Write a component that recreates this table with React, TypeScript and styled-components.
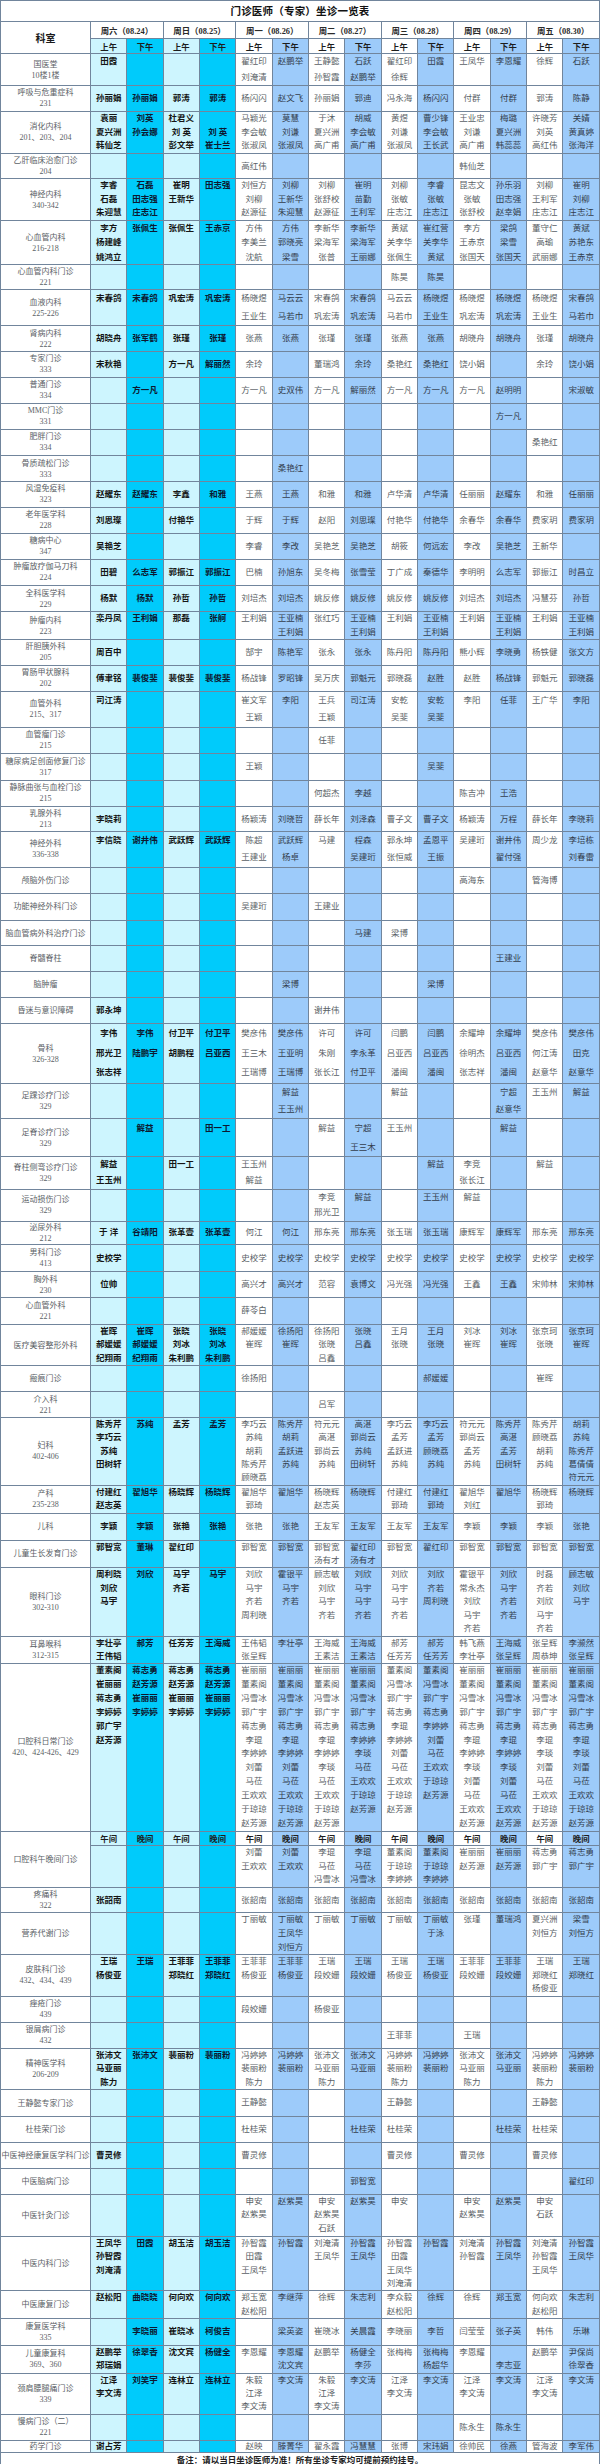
import React from "react";
import styled, { createGlobalStyle } from "styled-components";

const FONT = `"Liberation Serif", "Noto Sans CJK SC", serif`;
const LINE = "#71859c";

const GlobalStyle = createGlobalStyle`
  html, body { margin: 0; padding: 0; background: #ffffff; }
  body { font-family: ${FONT}; }
`;

const BG = ["#cdf5fe", "#00cbfb", "#ffffff", "#9dcbfa"];
const FG = ["#151515", "#0c1830", "#5a5f66", "#333d4c"];
const kindOf = (i: number) => (i < 4 ? i % 2 : 2 + (i % 2));

type Cells = string | Record<number, string>;
interface RowData {
  d: string;
  r: string;
  h: number;
  n: number;
  c: string[];
}

const R = (d: string, r: string, h: number, n: number, c: Cells): RowData => ({
  d,
  r,
  h,
  n,
  c:
    typeof c === "string"
      ? c.split("|")
      : Array.from({ length: 14 }, (_, i) => c[i] ?? ""),
});

const rep = (s: string, k: number) => Array.from({ length: k }, () => s).join("|");

const KQ_ALL = "崔丽丽/董素阁/冯雪冰/郭广宇/蒋志勇/李琨/李婷婷/刘蕾/马莅/王欢欢/于琼琼/赵芳源";
const KQ_WE = "蒋志勇/赵芳源/崔丽丽/李婷婷";
const KQ_TH = "崔丽丽/董素阁/冯雪冰/郭广宇/蒋志勇/李琨/李婷婷/李琰/刘蕾/马莅/王欢欢/赵芳源";
const KQ_FR = "崔丽丽/董素阁/冯雪冰/郭广宇/蒋志勇/李琨/李琰/刘蕾/马莅/王欢欢/于琼琼/赵芳源";

const ROWS_A: RowData[] = [
  R("国医堂", "10楼1楼", 31.7, 2, "田霞||||翟红印/刘淹清|赵鹏举|王静懿/孙智霞|石跃/赵鹏举|翟红印/徐辉|田霞|王凤华|李恩耀|徐辉|石跃"),
  R("呼吸与危重症科", "231", 26, 1, "孙丽娟|孙丽娟|郭涛|郭涛|杨闪闪|赵文飞|孙丽娟|郭迪|冯永海|杨闪闪|付群|付群|郭涛|陈静"),
  R("消化内科", "201、203、204", 41.7, 3, "袁丽/夏兴洲/韩仙芝|刘英/孙会娜|杜君义/刘 英/彭文举|/刘 英/崔士兰|马颖光/李会敏/张淑凤|莫慧/刘谦/张淑凤|于沐/夏兴洲/高广甫|胡威/李会敏/高广甫|黄煜/刘谦/张淑凤|曹少锋/李会敏/王长武|王业忠/刘谦/高广甫|梅璐/夏兴洲/韩蕊蕊|许晓芳/刘英/高红伟|关婧/黄真婷/张海洋"),
  R("乙肝临床治愈门诊", "204", 25.6, 1, { 4: "高红伟", 10: "韩仙芝" }),
  R("神经内科", "340-342", 41.7, 3, "李睿/石磊/朱迎慧|石磊/田志强/庄志江|崔明/王新华|田志强|刘恒方/刘柳/赵源征|刘柳/王新华/朱迎慧|刘柳/张舒校/赵源征|崔明/苗勤/王利军|刘柳/张敏/庄志江|李睿/张敏/庄志江|昆志文/张敏/张舒校|孙乐羽/田志强/赵幸娟|刘柳/王利军/庄志江|崔明/刘柳/庄志江"),
  R("心血管内科", "216-218", 44.3, 3, "李方/杨建峰/姚鸿立|张佩生|张佩生|王赤京|方伟/李美兰/沈航|方伟/郭晓亮/梁雪|李新华/梁海军/张普|李新华/梁海军/王丽娜|黄斌/关李华/张佩生|崔红营/关李华/黄斌|李方/王赤京/张国天|梁鸽/梁雪/张国天|董守仁/高瑜/武丽娜|黄斌/苏艳东/王赤京"),
  R("心血管内科门诊", "221", 25, 1, { 8: "陈昊", 9: "陈昊" }),
  R("血液内科", "225-226", 36, 2, "宋春鸽|宋春鸽|巩宏涛|巩宏涛|杨晓煜/王业生|马云云/马若巾|宋春鸽/巩宏涛|宋春鸽/巩宏涛|马云云/马若巾|杨晓煜/王业生|杨晓煜/巩宏涛|杨晓煜/巩宏涛|杨晓煜/王业生|宋春鸽/马若巾"),
  R("肾病内科", "222", 25.7, 1, "胡晓舟|张军鹤|张瑾|张瑾|张燕|张燕|张瑾|张瑾|张燕|张燕|胡晓舟|胡晓舟|张瑾|胡晓舟"),
  R("专家门诊", "333", 26, 1, "宋秋艳||方一凡|解丽然|余玲||董瑞鸿|余玲|桑艳红|桑艳红|饶小娟||余玲|饶小娟"),
  R("普通门诊", "334", 25.7, 1, "|方一凡|||方一凡|史双伟|方一凡|解丽然|方一凡|方一凡|方一凡|赵明明||宋淑敏"),
  R("MMC门诊", "331", 26, 1, { 11: "方一凡" }),
  R("肥胖门诊", "334", 26.6, 1, { 12: "桑艳红" }),
  R("骨质疏松门诊", "333", 25.7, 1, { 5: "桑艳红" }),
  R("风湿免疫科", "323", 26, 1, "赵耀东|赵耀东|李鑫|和雅|王燕|王燕|和雅|和雅|卢华清|卢华清|任丽丽|赵耀东|和雅|任丽丽"),
  R("老年医学科", "228", 26, 1, "刘思璨||付艳华||于辉|于辉|赵阳|刘思璨|付艳华|付艳华|余春华|余春华|费家玥|费家玥"),
  R("糖病中心", "347", 25.7, 1, "吴艳芝||||李睿|李改|吴艳芝|吴艳芝|胡筱|何远宏|李改|吴艳芝|王新华|"),
  R("肿瘤放疗伽马刀科", "224", 26.6, 1, "田碧|么志军|郭振江|郭振江|巴楠|孙旭东|吴冬梅|张雪莹|丁广成|秦德华|李明明|么志军|郭振江|时昌立"),
  R("全科医学科", "229", 26, 1, "杨默|杨默|孙哲|孙哲|刘培杰|刘培杰|姚反修|姚反修|姚反修|姚反修|刘培杰|刘培杰|冯慧芬|孙哲"),
  R("肿瘤内科", "223", 27.7, 2, "栾丹凤|王利娟|那磊|张舸|王利娟|王亚楠/王利娟|张红巧|王亚楠/王利娟|王利娟|王亚楠/王利娟|王利娟|王亚楠/王利娟|王利娟|王亚楠/王利娟"),
  R("肝胆胰外科", "205", 25.7, 1, "周百中||||郜宇|陈艳军|张永|张永|陈丹阳|陈丹阳|熊小辉|李晓勇|杨铁健|张文方"),
  R("胃肠甲状腺科", "202", 26, 1, "傅聿铭|裴俊斐|裴俊斐|裴俊斐|杨战锋|罗昭锋|吴万庆|郭魁元|郭晓磊|赵胜|赵胜|杨战锋|郭魁元|郭晓磊"),
  R("血管外科", "215、317", 36.6, 2, "司江涛||||崔文军/王颖|李阳|王兵/王颖|司江涛|安乾/吴斐|安乾/吴斐|李阳|任菲|王广华|李阳"),
  R("血管瘤门诊", "215", 25.7, 1, { 6: "任菲" }),
  R("糖尿病足创面修复门诊", "317", 26.7, 1, { 4: "王颖", 9: "吴斐" }),
  R("静脉曲张与血栓门诊", "215", 26, 1, { 6: "何超杰", 7: "李越", 10: "陈吉冲", 11: "王浩" }),
  R("乳腺外科", "213", 25, 1, "李晓莉||||杨颖涛|刘晓哲|薛长年|刘泽森|曹子文|曹子文|杨颖涛|万程|薛长年|李晓莉"),
  R("神经外科", "336-338", 36.6, 2, "李信晓|谢井伟|武跃辉|武跃辉|陈超/王建业|武跃辉/杨卓|马建|程森/吴建珩|郭永坤/张恒威|孟恩平/王振|吴建珩|谢井伟/翟付强|周少龙|李培栋/刘春雷"),
  R("颅脑外伤门诊", "", 26, 1, { 10: "高海东", 12: "管海博" }),
  R("功能神经外科门诊", "", 26.7, 1, { 4: "吴建珩", 6: "王建业" }),
  R("脑血管病外科治疗门诊", "", 25.7, 1, { 7: "马建", 8: "梁博" }),
  R("脊髓脊柱", "", 26, 1, { 11: "王建业" }),
  R("脑肿瘤", "", 25.6, 1, { 5: "梁博", 9: "梁博" }),
  R("昏迷与意识障碍", "", 26, 1, { 0: "郭永坤", 6: "谢井伟" }),
  R("骨科", "326-328", 60, 3, "李伟/邢光卫/张志祥|李伟/陆鹏宇|付卫平/胡鹏程|付卫平/吕亚西|樊彦伟/王三木/王瑞博|樊彦伟/王亚明/王瑞博|许可/朱刚/张长江|许可/李永革/付卫平|闫鹏/吕亚西/潘闽|闫鹏/吕亚西/潘闽|余耀坤/徐明杰/张志祥|余耀坤/吕亚西/潘闽|樊彦伟/何江涛/赵意华|樊彦伟/田克/赵意华"),
  R("足踝诊疗门诊", "329", 35, 2, { 5: "解益/王玉州", 8: "解益", 11: "宁超/赵意华", 12: "王玉州", 13: "解益" }),
  R("足脊诊疗门诊", "329", 38.4, 2, { 1: "解益", 3: "田一工", 6: "解益", 7: "宁超/王三木", 8: "王玉州", 11: "解益" }),
  R("脊柱侧弯诊疗门诊", "329", 32.6, 2, { 0: "解益/王玉州", 2: "田一工", 4: "王玉州/解益", 9: "解益", 10: "李竞/张长江", 12: "解益" }),
  R("运动损伤门诊", "329", 31.7, 2, { 6: "李竞/邢光卫", 7: "解益", 9: "王玉州", 10: "解益" }),
  R("泌尿外科", "212", 21.7, 1, "于 洋|谷靖阳|张革壹|张革壹|何江|何江|邢东亮|邢东亮|张玉瑞|张玉瑞|康辉军|康辉军|邢东亮|邢东亮"),
  R("男科门诊", "413", 27.6, 1, "史校学||||" + rep("史校学", 10)),
  R("胸外科", "230", 25.7, 1, "位帅||||高兴才|高兴才|范容|袁博文|冯光强|冯光强|王鑫|王鑫|宋帅林|宋帅林"),
  R("心血管外科", "221", 26.7, 1, { 4: "薛苓白" }),
  R("医疗美容整形外科", "", 41.6, 3, "崔晖/郝媛媛/纪翔雨|崔晖/郝媛媛/纪翔雨|张晓/刘冰/朱利鹏|张晓/刘冰/朱利鹏|郝媛媛/崔晖|徐扬阳/崔晖|徐扬阳/张晓/吕鑫|张晓/吕鑫|王月/张晓|王月/张晓|刘冰/崔晖|刘冰/崔晖|张京珂/张晓|张京珂/崔晖"),
  R("瘢痕门诊", "", 26, 1, { 4: "徐扬阳", 9: "郝媛媛", 12: "崔晖" }),
  R("介入科", "221", 25.7, 1, { 6: "吕军" }),
  R("妇科", "402-406", 67.7, 5, "陈秀芹/李巧云/苏纯/田树轩|苏纯|孟芳|孟芳|李巧云/苏纯/胡莉/陈秀芹/顾晓荔|陈秀芹/胡莉/孟跃进/苏纯|符元元/高湛/郭尚云/苏纯|高湛/郭尚云/苏纯/田树轩|李巧云/孟芳/孟跃进/苏纯|李巧云/孟芳/顾晓荔/苏纯|符元元/郭尚云/孟芳/苏纯|陈秀芹/高湛/孟芳/田树轩|陈秀芹/顾晓荔/胡莉/苏纯|胡莉/苏纯/陈秀芹/葛倩倩/符元元"),
  R("产科", "235-238", 28.3, 2, "付建红/赵志英|翟旭华|杨晓辉|杨晓辉|翟旭华/郭琦|翟旭华|杨晓辉/赵志英|杨晓辉|付建红/郭琦|付建红/郭琦|翟旭华/刘红|翟旭华|杨晓辉/郭琦|杨晓辉"),
  R("儿科", "", 26.7, 1, "李颖|李颖|张艳|张艳|张艳|张艳|王友军|王友军|王友军|王友军|李颖|李颖|李颖|张艳"),
  R("儿童生长发育门诊", "", 27.3, 2, "郭智宽|董琳|翟红印||郭智宽|郭智宽|郭智宽/汤有才|翟红印/汤有才|郭智宽|翟红印|郭智宽|郭智宽|郭智宽|郭智宽"),
  R("眼科门诊", "302-310", 68.7, 5, "周利晓/刘欣/马宇|刘欣|马宇/齐若|马宇|刘欣/马宇/齐若/周利晓|霍银平/马宇/齐若|顾志敏/刘欣/马宇/齐若|刘欣/马宇/马宇/齐若|刘欣/马宇/马宇/齐若|刘欣/齐若/周利晓|霍银平/常永杰/刘欣/马宇/齐若|刘欣/马宇/齐若/齐若|时磊/齐若/刘欣/马宇/齐若|顾志敏/刘欣/马宇"),
  R("耳鼻喉科", "312-315", 27.6, 2, "李壮亭/王伟韬|郝芳|任芳芳|王海威|王伟韬/张呈辉|李壮亭|王海威/王素洁|王海威/王素洁|郝芳/任芳芳|郝芳/任芳芳|韩飞燕/李壮亭|王海威/张呈辉|张呈辉/周恭坤|李濒然/张呈辉"),
  R("口腔科日常门诊", "420、424-426、429", 167.4, 12, [
    "董素阁/崔丽丽/蒋志勇/李婷婷/郭广宇/赵芳源", KQ_WE, KQ_WE, KQ_WE,
    KQ_ALL, KQ_ALL,
    "崔丽丽/董素阁/冯雪冰/郭广宇/蒋志勇/李琨/李婷婷/李琰/马莅/王欢欢/于琼琼/赵芳源",
    "崔丽丽/董素阁/冯雪冰/郭广宇/蒋志勇/李婷婷/李琰/马莅/王欢欢/于琼琼/赵芳源",
    "董素阁/冯雪冰/郭广宇/蒋志勇/李琨/李婷婷/刘蕾/马莅/王欢欢/于琼琼/赵芳源",
    "董素阁/冯雪冰/郭广宇/蒋志勇/李婷婷/刘蕾/马莅/王欢欢/于琼琼/赵芳源",
    KQ_TH, KQ_TH, KQ_FR, KQ_FR,
  ].join("|")),
];

const NOON = R("口腔科午晚间门诊", "", 41.7, 3, {
  4: "刘蕾/王欢欢", 5: "刘蕾/王欢欢",
  6: "李琨/马莅/冯雪冰", 7: "李琨/马莅/冯雪冰",
  8: "董素阁/于琼琼/李婷婷", 9: "董素阁/于琼琼/李婷婷",
  10: "崔丽丽/赵芳源", 11: "崔丽丽/赵芳源",
  12: "蒋志勇/郭广宇", 13: "蒋志勇/郭广宇",
});

const ROWS_B: RowData[] = [
  R("疼痛科", "322", 25.6, 1, "张韶南||||" + rep("张韶南", 10)),
  R("营养代谢门诊", "", 42, 3, { 4: "丁丽敏", 5: "丁丽敏/王凤华/刘恒方", 6: "丁丽敏", 7: "丁丽敏", 8: "丁丽敏", 9: "丁丽敏/于泳", 10: "张瑾", 11: "董瑞鸿", 12: "夏兴洲/刘恒方", 13: "梁雪/刘恒方" }),
  R("皮肤科门诊", "432、434、439", 41.4, 3, "王瑞/杨俊亚|王瑞|王菲菲/郑晓红|王菲菲/郑晓红|王菲菲/杨俊亚|王菲菲/杨俊亚|王瑞/段姣姗|王瑞/段姣姗|王瑞/杨俊亚|王瑞/杨俊亚|王菲菲/段姣姗|王菲菲/段姣姗|王瑞/郑晓红/杨俊亚|王瑞/郑晓红"),
  R("痤疮门诊", "439", 26, 1, { 4: "段姣姗", 6: "杨俊亚" }),
  R("银屑病门诊", "432", 26, 1, { 8: "王菲菲", 10: "王瑞" }),
  R("精神医学科", "206-209", 41.6, 3, "张沛文/马亚丽/陈力|张沛文|裴丽粉|裴丽粉|冯婷婷/裴丽粉/陈力|冯婷婷/裴丽粉|张沛文/马亚丽/陈力|张沛文/马亚丽|冯婷婷/裴丽粉/陈力|冯婷婷/裴丽粉|张沛文/马亚丽/陈力|张沛文/马亚丽|冯婷婷/裴丽粉/陈力|冯婷婷/裴丽粉"),
  R("王静懿专家门诊", "", 26.7, 1, { 4: "王静懿", 8: "王静懿", 12: "王静懿" }),
  R("杜桂荣门诊", "", 25.7, 1, { 4: "杜桂荣", 7: "杜桂荣", 8: "杜桂荣", 11: "杜桂荣", 12: "杜桂荣" }),
  R("中医神经康复医学科门诊", "", 26, 1, { 0: "曹灵修", 4: "曹灵修", 8: "曹灵修", 10: "曹灵修", 12: "曹灵修" }),
  R("中医脑病门诊", "", 26, 1, { 7: "郭智宽", 13: "翟红印" }),
  R("中医针灸门诊", "", 42.3, 3, { 4: "申安/赵紫昊", 5: "赵紫昊", 6: "申安/赵紫昊/石跃", 7: "赵紫昊", 8: "申安", 10: "申安/赵紫昊", 11: "赵紫昊", 12: "申安/石跃" }),
  R("中医内科门诊", "", 54.3, 4, "王凤华/孙智霞/刘淹清|田霞|胡玉洁|胡玉洁|孙智霞/田霞/王凤华|孙智霞|刘淹清/王凤华|孙智霞/王凤华|孙智霞/田霞/王凤华/刘淹清|孙智霞|刘淹清/孙智霞|孙智霞/王凤华|刘淹清/孙智霞/王凤华|孙智霞/王凤华"),
  R("中医康复门诊", "", 27.7, 2, "赵松阳|曲晓晓|何向欢|何向欢|郑玉宽/赵松阳|李继萍|徐辉|朱志利|李众毅/赵松阳|徐辉|徐辉|郑玉宽|何向欢/赵松阳|朱志利"),
  R("康复医学科", "335", 26.7, 1, "|李晓丽|崔晓冰|柯俊吉||梁英姿|崔晓冰|关晨霞|李晓丽|李哲|闫莹莹|张子英|韩伟|乐琳"),
  R("儿童康复科", "369、360", 28.3, 2, "赵鹏举/郑瑞娟|徐翠香|沈文宾|杨健全|李恩耀|李恩耀/沈文宾|赵鹏举|杨健全/李莎|张梅梅|张梅梅/杨超华|李恩耀|/李志亚|赵鹏举|尹保尚/徐翠香"),
  R("颈肩腰腿痛门诊", "339", 40.7, 3, "江泽/李文涛|刘笑宇|连林立|连林立|朱毅/江泽/李文涛|李文涛|朱毅/江泽/李文涛|李文涛|江泽/李文涛|李文涛|江泽/李文涛|李文涛|江泽/李文涛|李文涛"),
  R("慢病门诊（二）", "221", 26, 1, { 10: "陈永生", 11: "陈永生" }),
  R("药学门诊", "", 11.6, 1, "谢占芳||||赵映|滕菁华|翟永霞|冯慧慧|张博|宋玮娟|徐帅民|徐燕|管海波|李军伟"),
];

const DAYS = ["周六（08.24）", "周日（08.25）", "周一（08.26）", "周二（08.27）", "周三（08.28）", "周四（08.29）", "周五（08.30）"];

const Sheet = styled.table`
  width: 600px;
  border-collapse: collapse;
  table-layout: fixed;
  font-family: ${FONT};
`;

const DeptCol = styled.col`
  width: 90px;
`;

const Row = styled.tr<{ $h: number }>`
  height: ${(p) => p.$h}px;
`;

const TitleCell = styled.td`
  border: 1px solid ${LINE};
  padding: 0;
  background: #ffffff;
  text-align: center;
  vertical-align: middle;
  font-size: 10.5px;
  font-weight: 700;
  color: #111111;
  letter-spacing: 0.2px;
`;

const CornerCell = styled.th`
  border: 1px solid ${LINE};
  padding: 0;
  background: #ffffff;
  text-align: center;
  vertical-align: middle;
  font-size: 10px;
  font-weight: 700;
  color: #1a1a1a;
`;

const DayCell = styled.th`
  border: 1px solid ${LINE};
  padding: 0;
  background: #ffffff;
  text-align: center;
  vertical-align: middle;
  font-size: 8.4px;
  font-weight: 700;
  color: #2a2a2a;
  white-space: nowrap;
  overflow: hidden;
`;

const HalfCell = styled.th<{ $k: number }>`
  border: 1px solid ${LINE};
  padding: 0;
  background: ${(p) => BG[p.$k]};
  text-align: center;
  vertical-align: middle;
  font-size: 8.4px;
  font-weight: 700;
  color: #1d1d1d;
`;

const DeptCell = styled.td`
  border: 1px solid ${LINE};
  padding: 0;
  background: #ffffff;
  text-align: center;
  vertical-align: middle;
  font-size: 8px;
  line-height: 11px;
  color: #5b5f66;
  white-space: nowrap;
  overflow: hidden;
`;

const DeptLine = styled.div`
  white-space: nowrap;
`;

const SlotCell = styled.td<{ $k: number }>`
  border: 1px solid ${LINE};
  padding: 0;
  background: ${(p) => BG[p.$k]};
  color: ${(p) => FG[p.$k]};
  font-weight: ${(p) => (p.$k < 2 ? 700 : 400)};
  text-align: center;
  vertical-align: top;
  font-size: 8.5px;
  overflow: hidden;
`;

const NameLine = styled.div<{ $h: number }>`
  height: ${(p) => p.$h}px;
  line-height: ${(p) => p.$h}px;
  white-space: nowrap;
  overflow: hidden;
`;

const NoteCell = styled.td`
  border: 1px solid ${LINE};
  padding: 0;
  background: #ffffff;
  text-align: center;
  vertical-align: middle;
  font-size: 8.5px;
  font-weight: 700;
  color: #222222;
  white-space: nowrap;
`;

const Dept: React.FC<{ row: RowData; rowSpan?: number }> = ({ row, rowSpan }) => (
  <DeptCell rowSpan={rowSpan}>
    <DeptLine>{row.d}</DeptLine>
    {row.r && <DeptLine>{row.r}</DeptLine>}
  </DeptCell>
);

const Slots: React.FC<{ row: RowData }> = ({ row }) => {
  const lh = Math.max((row.h - 1) / row.n, 6);
  return (
    <>
      {row.c.map((cell, i) => (
        <SlotCell key={i} $k={kindOf(i)}>
          {cell
            ? cell.split("/").map((name, j) => (
                <NameLine key={j} $h={lh}>
                  {name || "\u00a0"}
                </NameLine>
              ))
            : null}
        </SlotCell>
      ))}
    </>
  );
};

const DataRow: React.FC<{ row: RowData }> = ({ row }) => (
  <Row $h={row.h}>
    <Dept row={row} />
    <Slots row={row} />
  </Row>
);

export default function App() {
  return (
    <>
      <GlobalStyle />
      <Sheet>
        <colgroup>
          <DeptCol />
          {Array.from({ length: 14 }, (_, i) => (
            <col key={i} />
          ))}
        </colgroup>
        <tbody>
          <Row $h={20.7}>
            <TitleCell colSpan={15}>门诊医师（专家）坐诊一览表</TitleCell>
          </Row>
          <Row $h={17.6}>
            <CornerCell rowSpan={2}>科室</CornerCell>
            {DAYS.map((d) => (
              <DayCell key={d} colSpan={2}>
                {d}
              </DayCell>
            ))}
          </Row>
          <Row $h={15}>
            {Array.from({ length: 14 }, (_, i) => (
              <HalfCell key={i} $k={kindOf(i)}>
                {i % 2 ? "下午" : "上午"}
              </HalfCell>
            ))}
          </Row>
          {ROWS_A.map((row) => (
            <DataRow key={row.d} row={row} />
          ))}
          <Row $h={14.3}>
            <Dept row={NOON} rowSpan={2} />
            {Array.from({ length: 14 }, (_, i) => (
              <HalfCell key={i} $k={kindOf(i)}>
                {i % 2 ? "晚间" : "午间"}
              </HalfCell>
            ))}
          </Row>
          <Row $h={NOON.h}>
            <Slots row={NOON} />
          </Row>
          {ROWS_B.map((row) => (
            <DataRow key={row.d} row={row} />
          ))}
          <Row $h={13.7}>
            <NoteCell colSpan={15}>
              备注：请以当日坐诊医师为准！所有坐诊专家均可提前预约挂号。
            </NoteCell>
          </Row>
        </tbody>
      </Sheet>
    </>
  );
}
